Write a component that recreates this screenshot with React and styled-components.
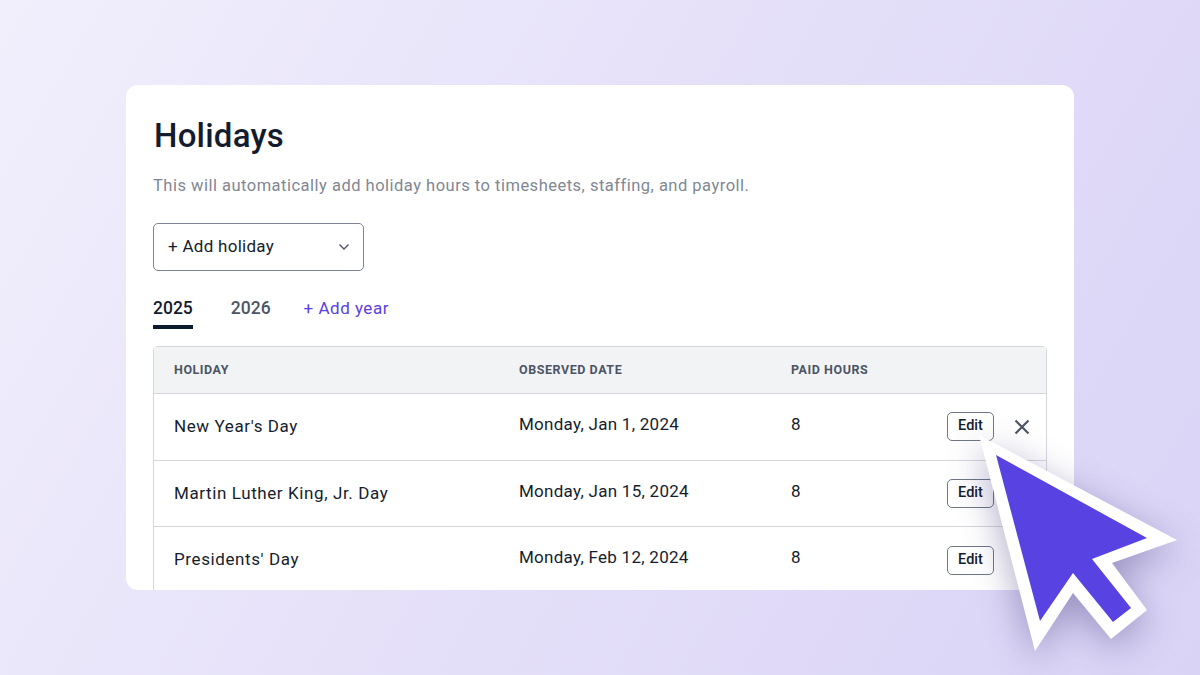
import React from "react";
import styled, { createGlobalStyle } from "styled-components";

const Global = createGlobalStyle`
  html, body { margin: 0; padding: 0; }
  body { font-family: Roboto, "Liberation Sans", sans-serif; }
`;

const Page = styled.div`
  position: relative;
  width: 1200px;
  height: 675px;
  overflow: hidden;
  padding: 85px 126px 85px;
  box-sizing: border-box;
  background: linear-gradient(120deg, #f1effc 0%, #e6e1f9 45%, #d9d3f6 100%);
`;

const Card = styled.section`
  height: 505px;
  overflow: hidden;
  background: #fff;
  border-radius: 12px;
  padding: 30px 27px 0;
  box-sizing: border-box;
`;

const Title = styled.h1`
  margin: 0;
  padding-left: 1px;
  font-size: 33px;
  line-height: 42px;
  font-weight: 500;
  letter-spacing: 0.22px;
  color: #131c2e;
`;

const Subtitle = styled.p`
  margin: 18px 0 0;
  font-size: 16.5px;
  line-height: 22px;
  letter-spacing: 0.49px;
  color: #7f8793;
`;

const Select = styled.div`
  margin-top: 26px;
  width: 211px;
  height: 48px;
  box-sizing: border-box;
  border: 1px solid #7d8493;
  border-radius: 5px;
  padding: 0 13px 3px 14px;
  display: flex;
  align-items: center;
  justify-content: space-between;
  font-size: 17px;
  letter-spacing: 0.28px;
  color: #151d2c;
`;

const Chevron = styled.svg`
  position: relative;
  top: 1.5px;
`;

const Tabs = styled.nav`
  margin-top: 25px;
  display: flex;
  align-items: flex-start;
  height: 33px;
`;

const Tab = styled.div`
  height: 33px;
  box-sizing: border-box;
  padding-top: 1px;
  line-height: 22px;
  margin-right: ${(p) => p.$gap}px;
  font-size: 17.5px;
  font-weight: 500;
  color: ${(p) => (p.$active ? "#131c2e" : "#4d5565")};
  border-bottom: ${(p) => (p.$active ? "4px solid #0d1b2e" : "none")};
`;

const AddYear = styled.div`
  padding-top: 1px;
  line-height: 22px;
  font-size: 17px;
  letter-spacing: 0.5px;
  color: #5a41e0;
`;

const Table = styled.div`
  margin-top: 17px;
  border: 1px solid #d4d7dd;
  border-bottom: none;
  border-radius: 5px 5px 0 0;
  width: 894px;
  box-sizing: border-box;
`;

const Row = styled.div`
  display: grid;
  grid-template-columns: 345px 272px 1fr 46px 53px;
  align-items: center;
  padding-left: 20px;
  box-sizing: border-box;
  height: ${(p) => (p.$head ? "47px" : "66.7px")};
  background: ${(p) => (p.$head ? "#f2f3f5" : "#fff")};
  border-bottom: 1px solid #d4d7dd;
`;

const Head = styled.div`
  font-size: 12.5px;
  font-weight: 700;
  letter-spacing: 0.55px;
  color: #4d5565;
  padding-bottom: 2px;
`;

const Cell = styled.div`
  font-size: 17px;
  letter-spacing: ${(p) => p.$track}px;
  color: #151d2c;
  position: relative;
  top: ${(p) => p.$up}px;
`;

const EditBtn = styled.button`
  width: 47px;
  height: 29px;
  padding: 0 0 2px;
  box-sizing: border-box;
  border: 1px solid #6f7786;
  border-radius: 5px;
  background: #fff;
  font-family: inherit;
  font-size: 14.5px;
  font-weight: 500;
  color: #151d2c;
`;

const CloseIcon = styled.svg`
  justify-self: center;
  width: 16px;
  height: 16px;
  position: relative;
  left: 2px;
`;

const Cursor = styled.svg`
  position: absolute;
  left: 0;
  top: 0;
  width: 1200px;
  height: 675px;
  pointer-events: none;
  filter: drop-shadow(0 10px 18px rgba(50, 40, 110, 0.38));
`;

const rows = [
  ["New Year's Day", "Monday, Jan 1, 2024"],
  ["Martin Luther King, Jr. Day", "Monday, Jan 15, 2024"],
  ["Presidents' Day", "Monday, Feb 12, 2024"],
];

export default function App() {
  return (
    <Page>
      <Global />
      <Card>
        <Title>Holidays</Title>
        <Subtitle>This will automatically add holiday hours to timesheets, staffing, and payroll.</Subtitle>
        <Select>
          <span>+ Add holiday</span>
          <Chevron width="12" height="8" viewBox="0 0 12 8" fill="none">
            <path d="M1.5 1.5 6 6l4.5-4.5" stroke="#4d5565" strokeWidth="1.4" />
          </Chevron>
        </Select>
        <Tabs>
          <Tab $active $gap={38}>2025</Tab>
          <Tab $gap={33}>2026</Tab>
          <AddYear>+ Add year</AddYear>
        </Tabs>
        <Table>
          <Row $head>
            <Head>HOLIDAY</Head>
            <Head>OBSERVED DATE</Head>
            <Head>PAID HOURS</Head>
          </Row>
          {rows.map(([name, date], i) => (
            <Row key={name}>
              <Cell $up={-1} $track={0.6}>{name}</Cell>
              <Cell $up={-3} $track={0.27}>{date}</Cell>
              <Cell $up={-3} $track={0}>8</Cell>
              <EditBtn>Edit</EditBtn>
              {i === 0 ? (
                <CloseIcon viewBox="0 0 16 16" fill="none">
                  <path d="M1.5 1.5l13 13M14.5 1.5l-13 13" stroke="#4d5565" strokeWidth="2.2" />
                </CloseIcon>
              ) : <span />}
            </Row>
          ))}
        </Table>
      </Card>
      <Cursor viewBox="0 0 1200 675">
        <path d="M979 435 1177 540 1112 563 1147 610 1111 639 1073 593 1035 651Z" fill="#fff" />
        <path d="M996 455 1147 538 1092 559 1131 608 1113 622 1073 573 1040 621Z" fill="#5842e2" />
      </Cursor>
    </Page>
  );
}
